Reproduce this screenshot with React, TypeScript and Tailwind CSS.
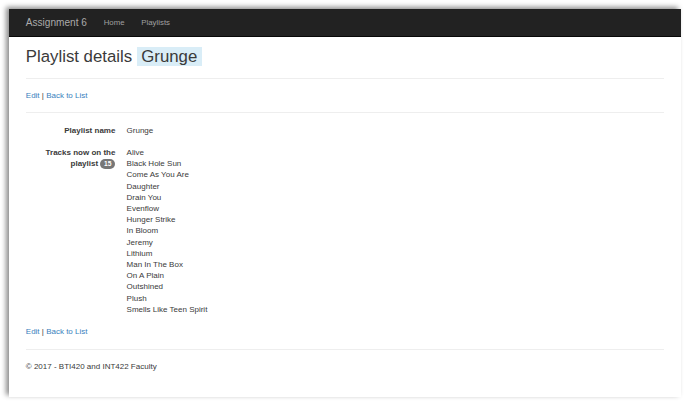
const tracks = [
  'Alive',
  'Black Hole Sun',
  'Come As You Are',
  'Daughter',
  'Drain You',
  'Evenflow',
  'Hunger Strike',
  'In Bloom',
  'Jeremy',
  'Lithium',
  'Man In The Box',
  'On A Plain',
  'Outshined',
  'Plush',
  'Smells Like Teen Spirit'
]

function ActionLinks() {
  return (
    <p className="leading-[11.2px] text-[8px]">
      <a href="#" className="text-[#3a7fbd]">Edit</a> |{' '}
      <a href="#" className="text-[#3a7fbd]">Back to List</a>
    </p>
  )
}

export default function App() {
  return (
    <div className="w-[684px] h-[404px] bg-white pl-[9px] pt-[9px] overflow-hidden" style={{ fontFamily: '"Liberation Sans", Arial, sans-serif' }}>
      <div className="w-[672px] h-[388px] bg-white text-[#3a3a3a] shadow-[-3px_-2px_5px_rgba(0,0,0,0.45)]">
        <nav className="h-[28px] bg-[#222] border-b border-[#080808] flex items-center px-[8.4px]">
          <span className="px-[8.4px] text-[10.08px] text-[#ababab]">Assignment 6</span>
          <a href="#" className="px-[8.4px] text-[7.84px] text-[#a0a0a0]">Home</a>
          <a href="#" className="px-[8.4px] text-[7.84px] text-[#a0a0a0]">Playlists</a>
        </nav>

        <div className="px-[16.8px]">
          <h2 className="mt-[11.2px] text-[16.8px] leading-[18.5px] font-normal">
            Playlist details <span className="bg-[#d9edf7] px-[4.5px]">Grunge</span>
          </h2>
          <hr className="my-[11.2px] border-t border-[#eee]" />
          <ActionLinks />
          <hr className="my-[11.2px] border-t border-[#eee]" />

          <dl className="text-[8px] leading-[11.2px]">
            <div className="flex">
              <dt className="w-[89.6px] text-right font-bold">Playlist name</dt>
              <dd className="ml-[11.2px]">Grunge</dd>
            </div>
            <div className="flex mt-[11.2px]">
              <dt className="w-[89.6px] text-right font-bold">
                Tracks now on the playlist
                <span className="inline-block align-middle ml-[2px] bg-[#777] text-white text-[6.72px] leading-[6.72px] font-bold px-[3.9px] py-[1.5px] rounded-[5.6px]">15</span>
              </dt>
              <dd className="ml-[11.2px] flex flex-col">
                {tracks.map((t) => (
                  <span key={t}>{t}</span>
                ))}
              </dd>
            </div>
          </dl>

          <div className="mt-[11.2px]">
            <ActionLinks />
          </div>
          <hr className="my-[11.2px] border-t border-[#eee]" />
          <footer>
            <p className="text-[8px] leading-[11.2px]">© 2017 - BTI420 and INT422 Faculty</p>
          </footer>
        </div>
      </div>
    </div>
  )
}
